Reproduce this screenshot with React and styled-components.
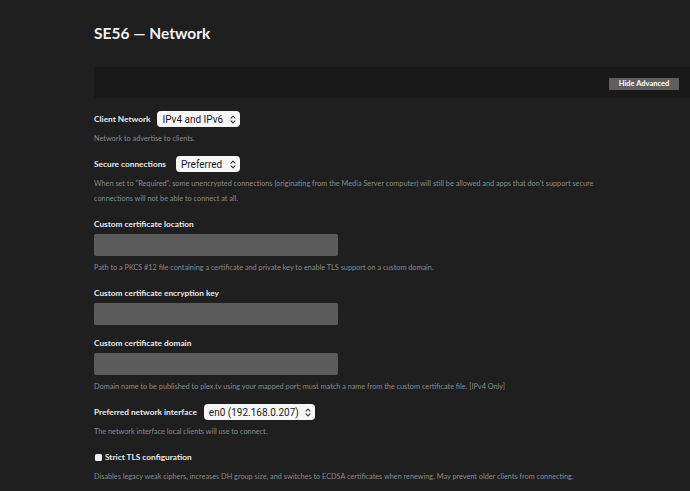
import styled, { createGlobalStyle } from "styled-components";

const GlobalStyle = createGlobalStyle`
  html, body {
    margin: 0;
    padding: 0;
    background: #1f1f1f;
  }
  body {
    font-family: "Lato", "Liberation Sans", sans-serif;
    -webkit-font-smoothing: antialiased;
  }
`;

const Page = styled.div`
  min-height: 491px;
  padding: 23px 0 0 94px;
  overflow: hidden;
`;

const Title = styled.h1`
  margin: 0 0 24px;
  font-size: 15.5px;
  line-height: 20px;
  font-weight: 700;
  color: #f2f2f2;
`;

const Toolbar = styled.div`
  height: 31px;
  background: #191919;
  display: flex;
  align-items: center;
  justify-content: flex-end;
  padding-right: 11px;
  margin-bottom: 13px;
`;

const ToolButton = styled.button`
  width: 70px;
  height: 12px;
  border: 0;
  border-radius: 1px;
  background: #5e5e5e;
  color: #fff;
  font-family: inherit;
  font-size: 7.5px;
  font-weight: 700;
  line-height: 12px;
  padding: 0;
  margin-top: 2px;
`;

const Settings = styled.div`
  display: flex;
  flex-direction: column;
  gap: 10px;
`;

const Group = styled.div`
  display: flex;
  flex-direction: column;
`;

const Row = styled.div`
  display: flex;
  align-items: center;
  height: 16px;
  gap: ${(p) => p.$gap || 7}px;
`;

const Label = styled.label`
  font-size: 8.3px;
  line-height: 16px;
  font-weight: 700;
  color: #e8e8e8;
  white-space: nowrap;
`;

const Hint = styled.p`
  margin: 4px 0 0;
  font-size: 7.3px;
  line-height: 15px;
  color: #8a8a8a;
  max-width: 500px;
`;

const Select = styled.div`
  display: inline-flex;
  align-items: center;
  justify-content: space-between;
  height: 16px;
  padding: 0 4px 0 5px;
  box-sizing: border-box;
  background: #f7f7f7;
  border-radius: 4px;
  color: #1a1a1a;
  font-family: "Roboto", "Liberation Sans", sans-serif;
  font-size: 10px;
  white-space: nowrap;
  width: ${(p) => p.$width}px;

  svg {
    flex-shrink: 0;
  }
`;

const Field = styled.div`
  width: 244px;
  height: 22px;
  margin-top: 2px;
  background: #5b5b5b;
  border-radius: 2px;
`;

const Box = styled.span`
  width: 7px;
  height: 7px;
  border-radius: 1.5px;
  background: #f0f0f0;
  margin-left: 1px;
`;

const Chevrons = () => (
  <svg width="6" height="9" viewBox="0 0 6 9" fill="none" stroke="#333" strokeWidth="1.1" strokeLinecap="round" strokeLinejoin="round">
    <path d="M1 3.2 3 1.2 5 3.2" />
    <path d="M1 5.8 3 7.8 5 5.8" />
  </svg>
);

const Dropdown = ({ value, width }) => (
  <Select $width={width}>
    <span>{value}</span>
    <Chevrons />
  </Select>
);

export default function App() {
  return (
    <>
      <GlobalStyle />
      <Page>
        <Title>SE56 — Network</Title>
        <Toolbar>
          <ToolButton>Hide Advanced</ToolButton>
        </Toolbar>
        <Settings>
          <Group>
            <Row $gap={7}>
              <Label>Client Network</Label>
              <Dropdown value="IPv4 and IPv6" width={83} />
            </Row>
            <Hint>Network to advertise to clients.</Hint>
          </Group>
          <Group>
            <Row $gap={10}>
              <Label>Secure connections</Label>
              <Dropdown value="Preferred" width={64} />
            </Row>
            <Hint>
              When set to "Required", some unencrypted connections (originating from the Media Server computer) will
              still be allowed and apps that don't support secure connections will not be able to connect at all.
            </Hint>
          </Group>
          <Group>
            <Label>Custom certificate location</Label>
            <Field />
            <Hint>Path to a PKCS #12 file containing a certificate and private key to enable TLS support on a custom domain.</Hint>
          </Group>
          <Group>
            <Label>Custom certificate encryption key</Label>
            <Field />
          </Group>
          <Group>
            <Label>Custom certificate domain</Label>
            <Field />
            <Hint>
              Domain name to be published to plex.tv using your mapped port; must match a name from the custom certificate
              file. [IPv4 Only]
            </Hint>
          </Group>
          <Group>
            <Row $gap={7}>
              <Label>Preferred network interface</Label>
              <Dropdown value="en0 (192.168.0.207)" width={111} />
            </Row>
            <Hint>The network interface local clients will use to connect.</Hint>
          </Group>
          <Group>
            <Row $gap={3}>
              <Box />
              <Label>Strict TLS configuration</Label>
            </Row>
            <Hint>
              Disables legacy weak ciphers, increases DH group size, and switches to ECDSA certificates when renewing. May
              prevent older clients from connecting.
            </Hint>
          </Group>
        </Settings>
      </Page>
    </>
  );
}
